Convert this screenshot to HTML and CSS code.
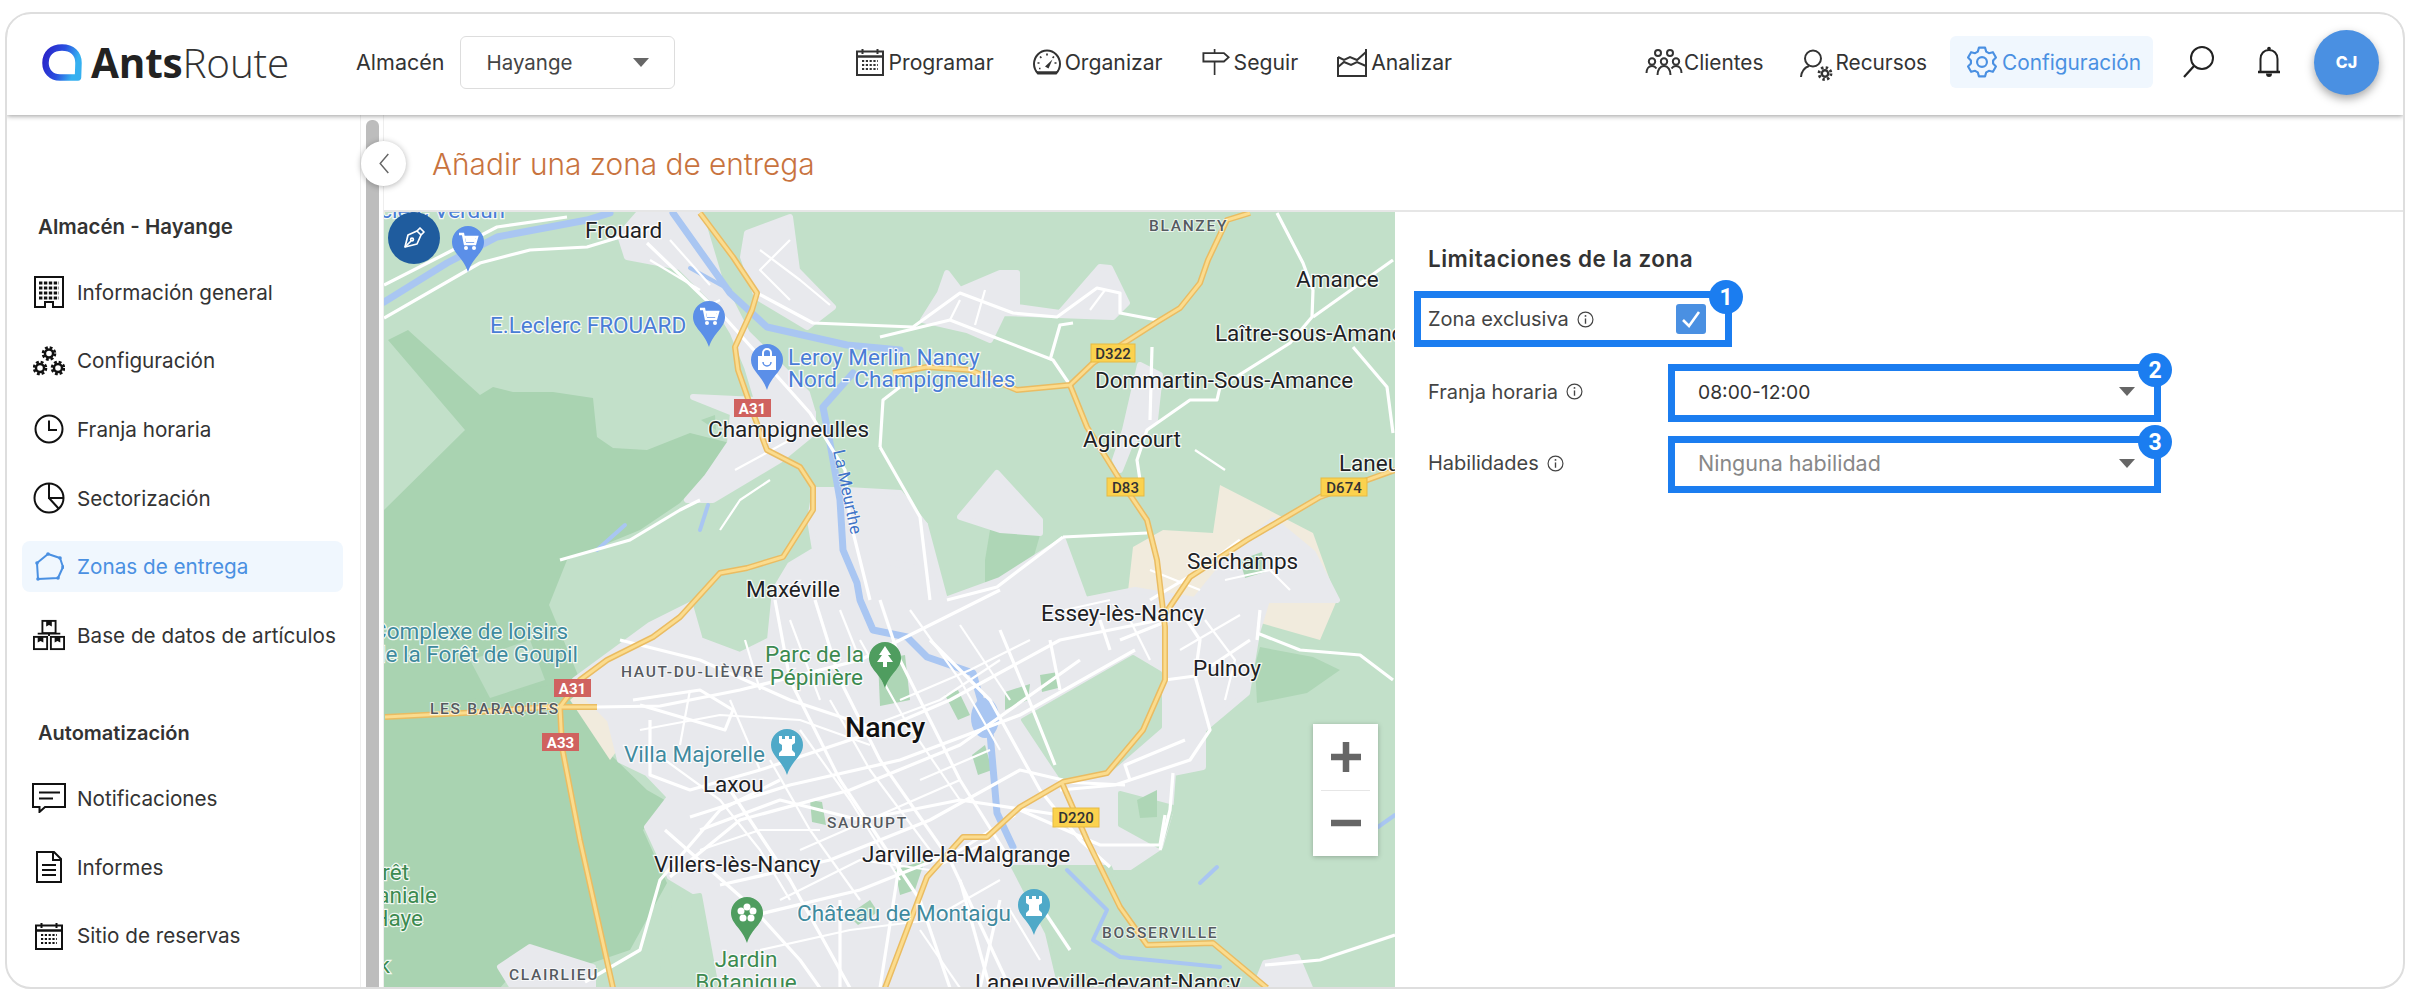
FILE: index.html
```html
<!DOCTYPE html>
<html lang="es">
<head>
<meta charset="utf-8">
<title>AntsRoute</title>
<link rel="stylesheet" href="styles.css">
</head>
<body>
<svg class="sprite" width="0" height="0" aria-hidden="true">
  <defs>
    <linearGradient id="logoGrad" x1="0" y1="0" x2="1" y2="0.3">
      <stop offset="0" stop-color="#2a22c8"/><stop offset=".55" stop-color="#2a4fe0"/><stop offset="1" stop-color="#35b0f0"/>
    </linearGradient>
    <symbol id="i-calendar" viewBox="0 0 28 28">
      <rect x="1" y="3.5" width="26" height="23.5" fill="none" stroke="currentColor" stroke-width="2"/>
      <path d="M1 8.5h26" stroke="currentColor" stroke-width="2.4"/>
      <path d="M6.5 1v5M21.5 1v5" stroke="currentColor" stroke-width="2"/>
      <path d="M6 13h16M6 17h16M6 21h16" stroke="currentColor" stroke-width="2.2" stroke-dasharray="2.2 1.6"/>
    </symbol>
    <symbol id="i-gauge" viewBox="0 0 28 26">
      <path d="M5 24.5C2.6 22 1 19 1 15 1 7.500 6.800 1.500 14 1.500S27 7.500 27 15c0 4-1.600 7-4 9.500z" fill="none" stroke="currentColor" stroke-width="2"/>
      <path d="M4 23.500h20" stroke="currentColor" stroke-width="2.600"/>
      <path d="M12 17.500l7.500-7-4 9z" fill="currentColor"/>
      <path d="M14 4.500v2M7 7.500l1.400 1.400M21 7.500l-1.400 1.400M4.500 14h2M23.500 14h-2M6 19.500h1.500" stroke="currentColor" stroke-width="1.700"/>
    </symbol>
    <symbol id="i-sign" viewBox="0 0 30 28">
      <path d="M1.500 4.500h22l5 4.500-5 4.500h-22z" fill="none" stroke="currentColor" stroke-width="2"/>
      <path d="M13.500 0v4.500M13.500 13.500V28" stroke="currentColor" stroke-width="1.800"/>
    </symbol>
    <symbol id="i-chart" viewBox="0 0 30 29">
      <path d="M1 9v19h28V1" fill="none" stroke="currentColor" stroke-width="2"/>
      <path d="M1 9l6 3 6-3 7 3 9-8M1 19l6-5 7 3 6-3 9 4" fill="none" stroke="currentColor" stroke-width="2"/>
    </symbol>
    <symbol id="i-people" viewBox="0 0 38 26">
      <g fill="none" stroke="currentColor" stroke-width="2">
        <circle cx="13" cy="4" r="3"/><circle cx="25" cy="4" r="3"/>
        <circle cx="19" cy="12.500" r="3.200"/><circle cx="7" cy="12.500" r="3.200"/><circle cx="31" cy="12.500" r="3.200"/>
        <path d="M1.500 24c0-4 2-7 5.500-7 2 0 3.500 1 4.500 2.500M36.500 24c0-4-2-7-5.500-7-2 0-3.500 1-4.500 2.500M12.500 26c0-5 2.500-9 6.500-9s6.500 4 6.500 9"/>
      </g>
    </symbol>
    <symbol id="i-resource" viewBox="0 0 34 33">
      <g fill="none" stroke="currentColor">
        <circle cx="13" cy="9.500" r="8" stroke-width="2"/>
        <path d="M1 28c.5-6 4-9.500 8-11" stroke-width="2"/>
        <circle cx="25" cy="24.500" r="3.200" stroke-width="2.400"/>
        <circle cx="25" cy="24.500" r="6" stroke-width="2.800" stroke-dasharray="2.400 2.310"/>
      </g>
    </symbol>
    <symbol id="i-gear" viewBox="0 0 24 24">
      <path d="M8.850 4.210 9.710 1.240h4.580l.86 2.970 2.020 1.170 3-.74 2.290 3.960-2.140 2.230v2.340l2.140 2.230-2.290 3.960-3-.74-2.020 1.170-.86 2.970H9.710l-.86-2.970-2.020-1.170-3 .74-2.290-3.960 2.140-2.230v-2.340L1.540 8.600l2.290-3.960 3 .74z" fill="none" stroke="currentColor" stroke-width="1.600" stroke-linejoin="round"/>
      <circle cx="12" cy="12" r="3.700" fill="none" stroke="currentColor" stroke-width="1.600"/>
    </symbol>
    <symbol id="i-search" viewBox="0 0 32 32">
      <circle cx="19" cy="12" r="11" fill="none" stroke="currentColor" stroke-width="2"/>
      <path d="M11 20L1 31" stroke="currentColor" stroke-width="2.200"/>
    </symbol>
    <symbol id="i-bell" viewBox="0 0 24 32">
      <path d="M3.500 25V13C3.500 7.500 7 4 12 4s8.500 3.500 8.500 9v12" fill="none" stroke="currentColor" stroke-width="2"/>
      <path d="M1 26h22" stroke="currentColor" stroke-width="2.400"/>
      <circle cx="12" cy="2.500" r="1.800" fill="currentColor"/>
      <path d="M9 27.500a3 3.500 0 0 0 6 0z" fill="currentColor"/>
    </symbol>
    <symbol id="i-building" viewBox="0 0 30 32">
      <path d="M1 1h28v30H19v-5h-8v5H1z" fill="none" stroke="currentColor" stroke-width="2"/>
      <path d="M5 7h20M5 12h20M5 17h20M5 22h20" stroke="currentColor" stroke-width="2.800" stroke-dasharray="3.400 1.500"/>
    </symbol>
    <symbol id="i-gears" viewBox="0 0 32 30">
      <g fill="none" stroke="currentColor">
        <circle cx="16" cy="7.500" r="4" stroke-width="2.400"/>
        <circle cx="16" cy="7.500" r="6" stroke-width="2.600" stroke-dasharray="2.800 1.910"/>
        <circle cx="7" cy="22" r="4" stroke-width="2.400"/>
        <circle cx="7" cy="22" r="6" stroke-width="2.600" stroke-dasharray="2.800 1.910"/>
        <circle cx="25" cy="22" r="4" stroke-width="2.400"/>
        <circle cx="25" cy="22" r="6" stroke-width="2.600" stroke-dasharray="2.800 1.910"/>
      </g>
    </symbol>
    <symbol id="i-clock" viewBox="0 0 30 30">
      <circle cx="15" cy="15" r="13.500" fill="none" stroke="currentColor" stroke-width="2"/>
      <path d="M15 6.500V16h8" fill="none" stroke="currentColor" stroke-width="2"/>
    </symbol>
    <symbol id="i-pie" viewBox="0 0 32 32">
      <circle cx="16" cy="16" r="14.500" fill="none" stroke="currentColor" stroke-width="2"/>
      <path d="M16 1.500V16H30.500M16 16l10 11" fill="none" stroke="currentColor" stroke-width="2"/>
    </symbol>
    <symbol id="i-zone" viewBox="0 0 30 30">
      <path d="M3 11l11-9 12 4 3 9-5 11-20 1z" fill="none" stroke="currentColor" stroke-width="2" stroke-linejoin="round"/>
      <g fill="currentColor"><circle cx="3" cy="11" r="1.800"/><circle cx="14" cy="2" r="1.800"/><circle cx="26" cy="6" r="1.800"/><circle cx="29" cy="15" r="1.800"/><circle cx="24" cy="26" r="1.800"/><circle cx="4" cy="27" r="1.800"/></g>
    </symbol>
    <symbol id="i-boxes" viewBox="0 0 34 32">
      <g fill="none" stroke="currentColor" stroke-width="2">
        <rect x="10" y="1" width="14" height="13"/><rect x="1" y="18" width="14" height="13"/><rect x="19" y="18" width="14" height="13"/>
        <path d="M5 14.500h24M17 14v3"/>
      </g>
      <path d="M14 1h6v6l-3-1.500L14 7zM5 18h6v6l-3-1.500L5 24zM23 18h6v6l-3-1.500L23 24z" fill="currentColor"/>
    </symbol>
    <symbol id="i-chat" viewBox="0 0 34 30">
      <path d="M1 1h32v23H13l-5.500 5V24H1z" fill="none" stroke="currentColor" stroke-width="2"/>
      <path d="M7 9.500h21M7 15.500h14" stroke="currentColor" stroke-width="2"/>
    </symbol>
    <symbol id="i-doc" viewBox="0 0 26 32">
      <path d="M1 1h17l7 7v23H1z" fill="none" stroke="currentColor" stroke-width="2"/>
      <path d="M17 1v8h8" fill="none" stroke="currentColor" stroke-width="2"/>
      <path d="M6 14h14M6 19h14M6 24h14" stroke="currentColor" stroke-width="2"/>
    </symbol>
    <symbol id="i-info" viewBox="0 0 16 16">
      <circle cx="8" cy="8" r="7" fill="none" stroke="currentColor" stroke-width="1.100"/>
      <path d="M8 7v5" stroke="currentColor" stroke-width="1.300"/><circle cx="8" cy="4.600" r=".9" fill="currentColor"/>
    </symbol>
  </defs>
</svg>

<div class="app">
  <header class="topbar">
    <a class="logo">
      <svg class="logo-mark" viewBox="0 0 40 37"><path d="M36 33.500H18C9 33.500 3.500 27 3.500 19 3.500 9.500 10 3.500 20 3.500S36.500 9.500 36.500 19z" fill="none" stroke="url(#logoGrad)" stroke-width="6.500" stroke-linejoin="round"/></svg>
      <span class="logo-text"><b>Ants</b>Route</span>
    </a>
    <div class="depot">
      <span class="depot-label">Almacén</span>
      <div class="depot-select"><span>Hayange</span><i class="caret"></i></div>
    </div>
    <nav class="nav">
      <a class="nav-item"><svg class="ic-28"><use href="#i-calendar"/></svg>Programar</a>
      <a class="nav-item"><svg class="ic-28"><use href="#i-gauge"/></svg>Organizar</a>
      <a class="nav-item"><svg class="ic-28"><use href="#i-sign"/></svg>Seguir</a>
      <a class="nav-item"><svg class="ic-30"><use href="#i-chart"/></svg>Analizar</a>
    </nav>
    <div class="tools">
      <a class="nav-item"><svg class="ic-people"><use href="#i-people"/></svg>Clientes</a>
      <a class="nav-item nav-recursos"><svg class="ic-res"><use href="#i-resource"/></svg>Recursos</a>
      <a class="nav-item nav-active"><svg class="ic-gear"><use href="#i-gear"/></svg>Configuración</a>
      <svg class="ic-search"><use href="#i-search"/></svg>
      <svg class="ic-bell"><use href="#i-bell"/></svg>
      <span class="avatar">CJ</span>
    </div>
  </header>

  <div class="main">
    <aside class="sidebar">
      <h3 class="side-title">Almacén - Hayange</h3>
      <ul class="side-list">
        <li class="side-item"><span class="side-ic"><svg class="s28"><use href="#i-building"/></svg></span>Información general</li>
        <li class="side-item"><span class="side-ic"><svg class="s32"><use href="#i-gears"/></svg></span>Configuración</li>
        <li class="side-item"><span class="side-ic"><svg class="s30"><use href="#i-clock"/></svg></span>Franja horaria</li>
        <li class="side-item"><span class="side-ic"><svg class="s32"><use href="#i-pie"/></svg></span>Sectorización</li>
        <li class="side-item side-active"><span class="side-ic"><svg class="s30"><use href="#i-zone"/></svg></span>Zonas de entrega</li>
        <li class="side-item"><span class="side-ic"><svg class="s32"><use href="#i-boxes"/></svg></span>Base de datos de artículos</li>
      </ul>
      <h3 class="side-title side-title-2">Automatización</h3>
      <ul class="side-list">
        <li class="side-item"><span class="side-ic"><svg class="s34"><use href="#i-chat"/></svg></span>Notificaciones</li>
        <li class="side-item"><span class="side-ic"><svg class="s26"><use href="#i-doc"/></svg></span>Informes</li>
        <li class="side-item"><span class="side-ic"><svg class="s28c"><use href="#i-calendar"/></svg></span>Sitio de reservas</li>
      </ul>
    </aside>

    <div class="rail">
      <div class="rail-thumb"></div>
      <button class="collapse"><svg viewBox="0 0 14 24"><path d="M11.500 2L3 12l8.500 10" fill="none" stroke="#666" stroke-width="1.500"/></svg></button>
    </div>

    <section class="content">
      <div class="page-head"><h1 class="page-title">Añadir una zona de entrega</h1></div>
      <div class="page-body">
        <div class="map">
          <svg class="map-svg" viewBox="384 212 1011 776">
            <defs>
              <path id="pin" d="M0-16A16 16 0 0 1 16 0C16 11 5 15 0 30-5 15-16 11-16 0A16 16 0 0 1 0-16Z"/>
              <g id="cart"><path d="M-9-8h4l2 10h10l2-7H-4" fill="none" stroke="#fff" stroke-width="2.500"/><path d="M-3-5h10v5H-2z" fill="#fff"/><circle cx="-2" cy="6" r="2" fill="#fff"/><circle cx="6" cy="6" r="2" fill="#fff"/></g>
              <g id="castle"><path d="M-8-9h3v3h3v-3h4v3h3v-3h3v7l-3 2v5l3 3v3H-8V8l3-3V0l-3-2z" fill="#fff"/></g>
            </defs>
            <rect class="m-base" x="384" y="212" width="1011" height="776"/>
            <!-- forests -->
            <path class="m-forest" d="M388 340L408 330 480 395 493 387 513 392 553 392 593 398 597 437 613 448 647 450 690 433 730 443 703 477 680 503 640 530 567 560 547 610 575 680 590 717 613 757 647 790 670 803 643 830 667 883 630 950 580 967 513 973 500 988H384V510L465 430Z"/>
            <path class="m-forest" d="M384 600L547 600 580 680 440 705 384 705Z"/>
            <path class="m-light" d="M470 660L530 640 545 680 490 698Z"/>
            <path class="m-forest2" d="M1260 647L1313 657 1340 670 1307 693 1257 703 1255 665Z"/>
            <path class="m-forest2" d="M990 530L1040 535 1030 570 985 595 985 560Z"/>
            <!-- beige -->
            <path class="m-beige" d="M1220 485L1263 507 1313 533 1337 600 1320 640 1250 620 1213 600 1127 600 1133 547 1163 530 1213 533Z"/>
            <path class="m-beige" d="M570 700L640 640 690 605 700 640 640 720 610 760Z"/>
            <!-- urban -->
            <g class="m-urban">
              <path d="M627 257L680 267 713 300 733 333 747 367 757 400 813 413 807 393 747 333 720 280 700 213 640 212 620 235Z"/>
              <path d="M693 397L733 413 730 443 707 477 687 500 713 500 780 460 813 433 813 413 757 400Z"/>
              <path d="M747 233L790 217 797 270 833 307 807 327 757 297 743 257Z"/>
              <path d="M575 680L650 625 690 605 700 640 740 655 770 640 775 590 790 565 815 550 810 520 815 490 847 490 900 493 925 525 945 600 1000 580 1063 540 1085 600 1135 590 1195 600 1230 557 1273 520 1313 553 1337 600 1267 600 1257 633 1247 693 1203 730 1203 767 1173 773 1170 813 1160 847 1130 867 1013 867 1047 933 1060 988H717L700 895 670 877 647 827 670 797 647 773 620 760 610 720 590 700Z"/>
              <path d="M947 273L960 290 1000 273 1017 273 1017 307 1060 313 1100 267 1110 268 1127 303 1113 317 1003 313 990 340 967 330 923 320 940 293Z"/>
              <path d="M1140 365L1160 375 1155 420 1130 445 1120 470 1115 460 1125 430Z"/>
              <path d="M960 517L997 473 1040 520 1040 533 1000 530Z"/>
              <path d="M500 967L530 947 593 967 593 988H513Z"/>
              <path d="M1265 963L1297 957 1310 988H1255Z"/>
              <path d="M880 493V560L925 570 925 525Z"/>
            </g>
            <!-- greens inside city -->
            <path class="m-base" d="M1023 720L1133 657 1160 673 1160 727 1107 773 1063 780Z"/>
            <path class="m-base" d="M1013 867L1110 867 1135 925 1210 945 1265 988H1060L1047 933Z"/>
            <path class="m-base" d="M670 900L700 895 717 988H660Z"/>
            <path class="m-base" d="M1120 793L1173 807 1160 847 1120 825Z"/>
            <path class="m-forest2" d="M1137 800L1157 790 1157 817 1140 818Z"/>
            <g class="m-forest2">
              <path d="M1005 692L1030 684 1028 700 1005 710Z"/><path d="M1040 675L1058 672 1058 688 1042 692Z"/>
              <path d="M945 695L958 690 970 715 958 720Z"/><path d="M878 660L905 655 910 700 880 706Z"/>
              <path d="M810 800L822 802 826 825 812 822Z"/><path d="M848 915L870 900 878 912 858 925Z"/>
              <path d="M895 870L925 860 915 890 900 895Z"/><path d="M972 755L985 745 992 770 978 775Z"/>
              <path d="M1240 560L1262 552 1265 572 1245 578Z"/><path d="M701 420L715 415 716 430Z"/>
            </g>
            <!-- water -->
            <g class="m-water">
              <path d="M384 302L447 263 497 237 587 220 610 213"/>
              <path d="M673 213L730 293 767 327 847 345 900 350"/>
              <path d="M853 373L823 407 830 443 840 500 843 550 857 583 860 600 873 630 907 637 927 657 973 673 990 733 997 813 1013 847" />
              <path class="thin" d="M1067 870L1107 910 1093 940 1120 957 1220 967"/>
              <path class="thin" d="M1200 883L1217 867"/><path class="thin" d="M1378 827L1395 815"/>
              <path class="thin" d="M597 550L625 525"/><path class="thin" d="M700 530L708 505"/>
              <path class="thin" d="M690 268L730 290"/>
            </g>
            <ellipse class="m-lake" cx="985" cy="718" rx="14" ry="20"/>
            <!-- minor roads -->
            <g class="m-road">
              <path d="M384 318L480 263 530 250 587 247 660 225"/>
              <path d="M384 285L447 253 497 227 567 217"/>
              <path d="M647 243L727 320 810 413 845 470 850 520 870 600"/>
              <path d="M757 293L813 323 913 327 960 293 1013 313 1057 317 1097 288 1120 293 1120 313 1157 320"/>
              <path d="M880 337L950 320 1053 360 1070 385"/><path d="M1050 360L1060 325 1073 323"/>
              <path d="M1277 213L1303 263 1313 290 1312 317 1290 343 1220 387 1217 400 1190 400 1147 430 1137 460 1140 480"/>
              <path d="M1152 347L1150 420"/><path d="M1393 260L1313 317"/>
              <path d="M1353 347L1387 387 1393 433"/>
              <path d="M880 447L883 400 900 387"/><path d="M880 447L920 517 930 600"/>
              <path d="M1063 537L1147 533"/><path d="M1063 537L997 587 947 600"/>
              <path d="M585 982L640 950 660 880 720 810 780 780"/>
              <path d="M560 560L630 540 680 510 700 500"/>
              <path d="M1257 633L1300 650 1360 655 1393 680"/><path d="M1395 935L1320 960 1265 965"/>
              <!-- city -->
              <path d="M597 707L660 706 740 690 860 660 940 620 1000 590"/>
              <path d="M620 640L700 660 790 700 880 730"/>
              <path d="M633 700L700 690 733 710 725 730 640 705"/>
              <path d="M650 720L650 775 690 790 760 770 880 730 950 700 1060 640 1160 620"/>
              <path d="M670 877L740 820 850 790 960 745 1080 660"/>
              <path d="M690 817L790 785 900 760 1020 715 1135 650"/>
              <path d="M665 830L750 905 800 960 820 988"/>
              <path d="M730 790L790 880 850 988"/>
              <path d="M775 600L790 680 840 780 920 900 950 988"/>
              <path d="M815 600L840 680 880 760 950 860 1010 988"/>
              <path d="M880 600L900 660 960 780 1010 860"/>
              <path d="M930 640L990 700 1040 790 1080 840 1110 867"/>
              <path d="M1000 630L1025 690 1055 765"/>
              <path d="M1050 640L1060 690"/><path d="M1100 620L1110 650"/>
              <path d="M700 830L780 800 860 820 960 800 1060 815"/>
              <path d="M720 885L830 860 930 820 1020 770 1063 780"/>
              <path d="M735 920L860 890 960 850 1015 815"/>
              <path d="M840 900L840 988M900 860L880 988"/><path d="M960 880L990 988"/>
              <path d="M1000 900L980 988"/><path d="M1040 905L1070 950"/>
              <path d="M1165 680L1195 676 1210 730 1190 760 1130 780 1115 785 1060 790"/>
              <path d="M1195 676L1200 640 1180 610M1205 670L1250 640"/>
              <path d="M1185 740L1125 765 1130 780"/><path d="M1173 773L1170 810 1160 850"/>
              <path d="M1125 785L1063 782"/><path d="M1020 810L1100 845 1160 845 1165 815"/>
              <path d="M1120 640L1170 620"/>
              <path d="M1150 600L1200 570 1240 540"/>
              <path d="M1260 610L1257 640"/>
            </g>
            <g class="m-road-thin">
              <path d="M640 730L720 715 800 720 870 745"/><path d="M680 745L690 690"/><path d="M730 700L760 770"/>
              <path d="M665 760L720 800 760 850 790 900"/><path d="M700 850L760 830 820 830"/>
              <path d="M770 760L810 830 860 900"/><path d="M800 730L850 800 900 880"/>
              <path d="M830 700L870 770 930 850"/><path d="M860 640L905 720 960 800"/>
              <path d="M790 620L820 700"/><path d="M745 640L760 690"/><path d="M840 610L860 660"/>
              <path d="M910 610L960 680 1000 750"/><path d="M960 625L1010 700"/>
              <path d="M780 900L860 860 930 870 990 840"/><path d="M760 950L850 930 930 920 1000 880"/>
              <path d="M800 850L880 815 960 780"/><path d="M900 700L970 670 1030 640"/>
              <path d="M860 730L940 700 1000 660"/><path d="M920 780L990 750"/>
              <path d="M1010 910L1040 960"/><path d="M920 930L960 988"/><path d="M1065 610L1110 600"/>
              <path d="M1125 610L1150 660"/><path d="M1205 620L1235 660 1225 700"/><path d="M1180 650L1240 615"/>
              <path d="M1225 580L1270 570 1290 590"/><path d="M1150 570L1200 590"/>
              <path d="M770 480L740 500 720 530"/><path d="M735 470L790 440"/><path d="M790 240L760 270 790 300"/>
              <path d="M760 250L800 280 830 305"/><path d="M650 260L700 290"/><path d="M670 240L710 285"/>
              <path d="M960 300L950 320M985 290L975 325"/><path d="M1105 290L1090 310"/>
              <path d="M1195 450L1225 470"/><path d="M700 310L720 300"/>
            </g>
            <!-- highways -->
            <g class="m-hw">
              <path id="h1" d="M700 213L733 257 757 293 752 310 735 347 738 370 753 413 767 450 800 467 813 487 813 510 783 557 747 568 720 573 680 617 653 637 607 660 580 680 560 707 562 747 580 840 613 988"/>
              <path id="h2" d="M385 717L463 713 547 707 597 707"/>
              <path id="h3" d="M1250 213L1227 220 1208 260 1200 283 1180 308 1157 322 1093 363 1070 385 1017 390 970 370 927 367 893 373"/>
              <path id="h4" d="M1070 385L1087 427 1120 480 1147 520 1157 560 1165 627 1165 680 1143 730 1107 773 1063 782 1020 807 987 837 963 837 927 877 885 988"/>
              <path id="h5" d="M1062 783L1087 840 1120 907 1147 945 1213 943 1267 988"/>
              <path id="h6" d="M1395 470L1320 497 1247 540 1190 577 1163 617"/>
            </g>
            <g class="m-hw-in">
              <use href="#h1"/><use href="#h2"/><use href="#h3"/><use href="#h4"/><use href="#h5"/><use href="#h6"/>
            </g>
            <!-- shields -->
            <g class="shield-r"><rect x="734" y="399" width="37" height="18"/><text x="752.500" y="413.500">A31</text></g>
            <g class="shield-r"><rect x="554" y="679" width="37" height="18"/><text x="572.500" y="693.500">A31</text></g>
            <g class="shield-r"><rect x="542" y="733" width="37" height="18"/><text x="560.500" y="747.500">A33</text></g>
            <g class="shield-y"><rect x="1091" y="344" width="44" height="18"/><text x="1113" y="358.500">D322</text></g>
            <g class="shield-y"><rect x="1107" y="478" width="37" height="18"/><text x="1125.500" y="492.500">D83</text></g>
            <g class="shield-y"><rect x="1321" y="478" width="46" height="18"/><text x="1344" y="492.500">D674</text></g>
            <g class="shield-y"><rect x="1053" y="808" width="46" height="19"/><text x="1076" y="823">D220</text></g>
            <!-- pins -->
            <g transform="translate(468 242)"><use href="#pin" fill="#5b8fe8"/><use href="#cart"/></g>
            <g transform="translate(709 317)"><use href="#pin" fill="#5b8fe8"/><use href="#cart"/></g>
            <g transform="translate(767 360)"><use href="#pin" fill="#5b8fe8"/><path d="M-9-4H9V10H-9z" fill="#fff"/><path d="M-4-4v-3a4 4 0 0 1 8 0v3" fill="none" stroke="#fff" stroke-width="2"/><path d="M-4 2a4 4 0 0 0 8 0" fill="none" stroke="#5b8fe8" stroke-width="1.500"/></g>
            <g transform="translate(885 658)"><use href="#pin" fill="#4f9d5f"/><path d="M0-12L6-3H3L8 4H3v0H2V9H-2V4H-8L-3-3H-6Z" fill="#fff"/></g>
            <g transform="translate(787 745)"><use href="#pin" fill="#4fa9c8"/><use href="#castle"/></g>
            <g transform="translate(1034 905)"><use href="#pin" fill="#4fa9c8"/><use href="#castle"/></g>
            <g transform="translate(747 913)"><use href="#pin" fill="#4f9d5f"/><g fill="#fff"><circle cy="-6" r="3.500"/><circle cx="6" cy="-2" r="3.500"/><circle cx="4" cy="5" r="3.500"/><circle cx="-4" cy="5" r="3.500"/><circle cx="-6" cy="-2" r="3.500"/></g></g>
            <!-- labels -->
            <text class="lbl lbl-blue" text-anchor="end" x="505" y="218">E.Leclerc Verdun</text>
            <text class="lbl" x="585" y="238">Frouard</text>
            <text class="lbl lbl-blue" x="490" y="333">E.Leclerc FROUARD</text>
            <text class="lbl lbl-blue" x="788" y="365">Leroy Merlin Nancy</text>
            <text class="lbl lbl-blue" x="788" y="387">Nord - Champigneulles</text>
            <text class="lbl" x="708" y="437">Champigneulles</text>
            <text class="lbl" x="746" y="597">Maxéville</text>
            <text class="lbl" x="1296" y="287">Amance</text>
            <text class="lbl" x="1215" y="341">Laître-sous-Amance</text>
            <text class="lbl" x="1095" y="388">Dommartin-Sous-Amance</text>
            <text class="lbl" x="1083" y="447">Agincourt</text>
            <text class="lbl" x="1339" y="471">Laneuvelotte</text>
            <text class="lbl" x="1187" y="569">Seichamps</text>
            <text class="lbl" x="1041" y="621">Essey-lès-Nancy</text>
            <text class="lbl" x="1193" y="676">Pulnoy</text>
            <text class="lbl" x="703" y="792">Laxou</text>
            <text class="lbl" x="654" y="872">Villers-lès-Nancy</text>
            <text class="lbl" x="862" y="862">Jarville-la-Malgrange</text>
            <text class="lbl" x="975" y="990">Laneuveville-devant-Nancy</text>
            <text class="lbl lbl-city" x="845" y="737">Nancy</text>
            <text class="lbl lbl-teal" text-anchor="end" x="568" y="639">Complexe de loisirs</text>
            <text class="lbl lbl-teal" text-anchor="end" x="578" y="662">de la Forêt de Goupil</text>
            <text class="lbl lbl-teal" x="624" y="762">Villa Majorelle</text>
            <text class="lbl lbl-teal" x="797" y="921">Château de Montaigu</text>
            <text class="lbl lbl-green" x="765" y="662">Parc de la</text>
            <text class="lbl lbl-green" text-anchor="end" x="863" y="685">Pépinière</text>
            <text class="lbl lbl-green" text-anchor="middle" x="746" y="967">Jardin</text>
            <text class="lbl lbl-green" text-anchor="middle" x="746" y="990">Botanique</text>
            <text class="lbl lbl-green" text-anchor="end" x="409" y="880">Forêt</text>
            <text class="lbl lbl-green" text-anchor="end" x="437" y="903">Domaniale</text>
            <text class="lbl lbl-green" text-anchor="end" x="423" y="926">de Haye</text>
            <text class="lbl lbl-green" text-anchor="end" x="390" y="973">k</text>
            <text class="lbl-sm" x="1149" y="231">BLANZEY</text>
            <text class="lbl-sm" x="621" y="677">HAUT-DU-LIÈVRE</text>
            <text class="lbl-sm" x="430" y="714">LES BARAQUES</text>
            <text class="lbl-sm" x="827" y="828">SAURUPT</text>
            <text class="lbl-sm" x="509" y="980">CLAIRLIEU</text>
            <text class="lbl-sm" x="1102" y="938">BOSSERVILLE</text>
            <text class="lbl-river" transform="translate(833 451) rotate(78)">La Meurthe</text>
          </svg>
          <button class="draw-btn">
            <svg viewBox="0 0 28 28"><g fill="none" stroke="#fff" stroke-width="1.700" stroke-linejoin="round"><path d="M5 23L8 11 17 7 21 11 17 20z"/><path d="M5 23l6-6"/><circle cx="12" cy="15.500" r="1.400"/><path d="M17 7l3-3 4 4-3 3"/></g></svg>
          </button>
          <div class="zoom-ctl">
            <span class="zoom-btn"><svg viewBox="0 0 30 30"><path d="M0 15h30M15 0v30" stroke="#666" stroke-width="6.500"/></svg></span>
            <span class="zoom-btn"><svg viewBox="0 0 30 30"><path d="M0 15h30" stroke="#666" stroke-width="6.500"/></svg></span>
          </div>
        </div>
        <div class="panel">
          <h2 class="panel-title">Limitaciones de la zona</h2>
          <div class="mark mark-row">
            <span class="field-label">Zona exclusiva <svg class="info"><use href="#i-info"/></svg></span>
            <span class="check"><svg viewBox="0 0 30 30"><path d="M7 16l6 6L23 8" fill="none" stroke="#fff" stroke-width="2.600"/></svg></span>
            <b class="badge">1</b>
          </div>
          <div class="field-row field-row-2">
            <span class="field-label">Franja horaria <svg class="info"><use href="#i-info"/></svg></span>
            <div class="mark mark-select"><span>08:00-12:00</span><i class="caret"></i><b class="badge">2</b></div>
          </div>
          <div class="field-row field-row-3">
            <span class="field-label">Habilidades <svg class="info"><use href="#i-info"/></svg></span>
            <div class="mark mark-select mark-empty"><span>Ninguna habilidad</span><i class="caret"></i><b class="badge">3</b></div>
          </div>
        </div>
      </div>
    </section>
  </div>
</div>
</body>
</html>
```

FILE: styles.css
```css
* { box-sizing: border-box; }
html, body { margin: 0; height: 1000px; overflow: hidden; background: #fff; }
body {
  padding: 12px 5px 11px;
  font-family: Inter, "Liberation Sans", sans-serif;
  color: #333;
}
.sprite { position: absolute; }
ul { list-style: none; margin: 0; padding: 0; }
h1, h2, h3 { margin: 0; font-weight: 600; }
svg { display: block; flex: none; }

.app {
  height: 100%;
  display: flex;
  flex-direction: column;
  border: 2px solid #dedede;
  border-radius: 26px;
  overflow: hidden;
  background: #fff;
}

/* top bar */
.topbar {
  position: relative;
  z-index: 2;
  flex: none;
  height: 101px;
  display: flex;
  align-items: center;
  padding: 0 24px 5px 35px;
  background: #fff;
  box-shadow: 0 1px 5px rgba(0, 0, 0, .4);
}
.logo { display: flex; align-items: center; gap: 9px; }
.logo-mark { width: 40px; height: 37px; }
.logo-text {
  font-family: "Open Sans", sans-serif;
  font-size: 40.500px;
  font-weight: 300;
  letter-spacing: -.2px;
  line-height: 1;
  color: #333;
  margin-top: 2px;
}
.logo-text b { font-weight: 700; color: #222; }
.depot { display: flex; align-items: center; gap: 16px; margin-left: 67px; }
.depot-label { font-size: 21.500px; color: #333; }
.depot-select {
  width: 215px;
  height: 53px;
  display: flex;
  align-items: center;
  justify-content: space-between;
  padding: 0 25px;
  border: 1.5px solid #ddd;
  border-radius: 6px;
  font-size: 20.500px;
  color: #444;
}
.caret {
  display: block;
  flex: none;
  width: 0;
  height: 0;
  border-left: 8px solid transparent;
  border-right: 8px solid transparent;
  border-top: 9px solid #666;
}
.nav { display: flex; align-items: center; gap: 39px; margin-left: 181px; }
.nav .nav-item { gap: 4px; font-size: 21.200px; }
.tools { display: flex; align-items: center; margin-left: auto; }
.nav-item { display: flex; align-items: center; gap: 6px; font-size: 21.500px; color: #333; white-space: nowrap; }
.tools .nav-item { font-size: 20.800px; }
.ic-28 { width: 28px; height: 28px; }
.ic-30 { width: 30px; height: 29px; }
.ic-people { width: 38px; height: 26px; margin-right: -5px; }
.ic-res { width: 34px; height: 33px; margin-right: -5px; margin-top: 6px; }
.nav-recursos { margin-left: 37px; }
.tools .nav-active {
  margin-left: 23px;
  height: 52px;
  padding: 0 12px 0 16px;
  gap: 4px;
  border-radius: 6px;
  background: #f0f7fe;
  color: #4a90e2;
}
.ic-gear { width: 32px; height: 32px; }
.ic-search { width: 32px; height: 32px; margin-left: 30px; color: #222; }
.ic-bell { width: 24px; height: 32px; margin-left: 42px; color: #222; }
.avatar {
  width: 65px;
  height: 65px;
  margin-left: 33px;
  display: flex;
  align-items: center;
  justify-content: center;
  border-radius: 50%;
  background: #4a90e2;
  color: #fff;
  font-size: 16px;
  font-weight: 800;
  box-shadow: 0 4px 10px rgba(0, 0, 0, .35);
}

/* layout */
.main { flex: 1; min-height: 0; display: flex; }
.sidebar { flex: none; width: 353px; padding: 99px 17px 0 15px; }
.side-title { font-size: 20.500px; line-height: 26px; margin: 0 0 26.5px 16px; color: #333; }
.side-title-2 { margin-top: 59.500px; font-size: 20px; }
.side-list { display: flex; flex-direction: column; gap: 17.700px; }
.side-item {
  height: 51px;
  display: flex;
  align-items: center;
  gap: 11px;
  padding-left: 10px;
  border-radius: 8px;
  font-size: 20.700px;
  white-space: nowrap;
  color: #333;
}
.side-active { background: #f0f7fe; color: #4a90e2; }
.side-ic { flex: none; width: 34px; display: flex; justify-content: center; color: #111; }
.side-active .side-ic { color: #4a90e2; }
.s26 { width: 26px; height: 32px; }
.s28 { width: 30px; height: 32px; }
.s28c { width: 28px; height: 28px; }
.s30 { width: 30px; height: 30px; }
.s32 { width: 32px; height: 32px; }
.s34 { width: 34px; height: 30px; }

.rail {
  position: relative;
  flex: none;
  width: 24px;
  padding: 5px 5px 0;
  border-left: 1px solid #eee;
  border-right: 1px solid #eee;
}
.rail-thumb { width: 13px; height: 100%; background: #bdbdbd; border-radius: 6px 6px 0 0; }
.collapse {
  position: absolute;
  z-index: 3;
  top: 26px;
  left: 0;
  width: 45px;
  height: 45px;
  padding: 11px 0;
  display: flex;
  justify-content: center;
  border: 0;
  border-radius: 50%;
  background: #fff;
  box-shadow: 0 1px 6px rgba(0, 0, 0, .3);
}
.collapse svg { width: 14px; height: 23px; }

.content { flex: 1; min-width: 0; display: flex; flex-direction: column; }
.page-head { flex: none; height: 97px; display: flex; align-items: center; padding: 2px 0 0 48px; border-bottom: 2px solid #e6e6e6; }
.page-title { font-size: 29.800px; font-weight: 300; color: #c8733e; }
.page-body { flex: 1; min-height: 0; display: flex; }

/* map */
.map { position: relative; flex: none; width: 1011px; overflow: hidden; }
.map-svg { width: 1011px; height: 776px; }
.m-base { fill: #c2e0c9; stroke: #c2e0c9; stroke-width: 4; stroke-linejoin: round; }
.m-light { fill: #bcdcc3; }
.m-forest { fill: #a9d3b1; }
.m-forest2 { fill: #aed6b6; }
.m-beige { fill: #f1ebdd; }
.m-urban { fill: #e8e9ed; stroke: #e8e9ed; stroke-width: 6; stroke-linejoin: round; }
.m-water { fill: none; stroke: #a9c6f2; stroke-width: 7; stroke-linejoin: round; stroke-linecap: round; }
.m-water .thin { stroke-width: 4; }
.m-lake { fill: #a9c6f2; }
.m-road { fill: none; stroke: #fff; stroke-width: 3.200; stroke-linejoin: round; }
.m-road-thin { fill: none; stroke: #fff; stroke-width: 2.200; stroke-linejoin: round; }
.m-hw { fill: none; stroke: #eabc62; stroke-width: 6; stroke-linejoin: round; }
.m-hw-in { fill: none; stroke: #fbdc8e; stroke-width: 3; stroke-linejoin: round; }
.shield-r rect { fill: #d0625f; }
.shield-r text { fill: #fff; font: 700 15px Roboto, sans-serif; text-anchor: middle; }
.shield-y rect { fill: #fbd24e; stroke: #e6b944; stroke-width: 1; }
.shield-y text { fill: #333; font: 500 15px Roboto, sans-serif; text-anchor: middle; }
.lbl {
  font: 400 22.500px Roboto, sans-serif;
  fill: #202124;
  stroke: #fff;
  stroke-width: 2.500px;
  stroke-opacity: .85;
  paint-order: stroke;
}
.lbl-blue { fill: #4a7dd6; }
.lbl-teal { fill: #3f8a9e; }
.lbl-green { fill: #3c8a50; }
.lbl-city { font-size: 28.500px; font-weight: 500; fill: #111; }
.lbl-sm {
  font: 500 15.500px Roboto, sans-serif;
  letter-spacing: 1.700px;
  fill: #555a60;
  stroke: #fff;
  stroke-width: 2px;
  stroke-opacity: .7;
  paint-order: stroke;
}
.lbl-river { font: 400 17px Roboto, sans-serif; fill: #3f74c8; stroke: #fff; stroke-width: 1.500px; stroke-opacity: .6; paint-order: stroke; }

.draw-btn {
  position: absolute;
  left: 4px;
  top: 0;
  width: 52px;
  height: 52px;
  padding: 12px;
  border: 0;
  border-radius: 50%;
  background: #1f5c9e;
}
.zoom-ctl {
  position: absolute;
  left: 929px;
  top: 512px;
  width: 65px;
  height: 132px;
  display: flex;
  flex-direction: column;
  background: #fff;
  box-shadow: 0 1px 5px rgba(0, 0, 0, .25);
}
.zoom-btn { flex: 1; display: flex; align-items: center; justify-content: center; }
.zoom-btn + .zoom-btn { position: relative; }
.zoom-btn + .zoom-btn::before {
  content: "";
  position: absolute;
  top: 0;
  left: 8px;
  right: 8px;
  height: 1px;
  background: #e6e6e6;
}
.zoom-btn svg { width: 30px; height: 30px; }

/* panel */
.panel { flex: 1; min-width: 0; padding: 34px 0 0 33px; }
.panel-title { font-size: 22.500px; letter-spacing: .5px; line-height: 26px; color: #333; margin-bottom: 19px; }
.mark { position: relative; border: 7px solid #1b7df0; }
.mark-row {
  width: 318px;
  height: 56px;
  margin-left: -14px;
  display: flex;
  align-items: center;
  justify-content: space-between;
  padding: 0 19px 0 7px;
}
.field-label { display: inline-flex; align-items: center; gap: 8px; font-size: 20px; color: #444; white-space: nowrap; }
.field-row .field-label { margin-top: -3px; }
.info { width: 17px; height: 17px; color: #444; }
.check { width: 30px; height: 30px; border-radius: 3px; background: #4a90e2; }
.check svg { width: 30px; height: 30px; }
.badge {
  position: absolute;
  top: -18px;
  right: -18px;
  width: 34px;
  height: 34px;
  display: flex;
  align-items: center;
  justify-content: center;
  border-radius: 50%;
  background: #1b7df0;
  color: #fff;
  font: 700 23px Roboto, sans-serif;
}
.field-row { display: grid; grid-template-columns: 240px 493px; align-items: center; }
.field-row-2 { margin-top: 17px; }
.field-row-3 { margin-top: 14px; }
.mark-select {
  height: 58px;
  display: flex;
  align-items: center;
  justify-content: space-between;
  padding: 0 19px 3px 23px;
  font-size: 19.300px;
  color: #333;
}
.mark-empty { height: 57px; color: #888; font-size: 21.500px; }
```
